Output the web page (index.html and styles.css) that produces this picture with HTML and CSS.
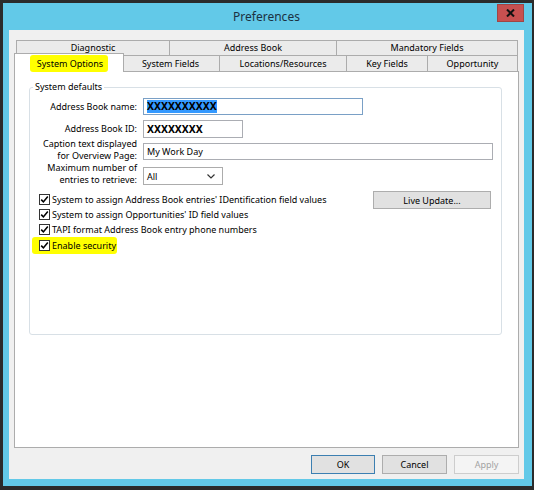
FILE: index.html
```html
<!DOCTYPE html>
<html lang="en">
<head>
<meta charset="utf-8">
<title>Preferences</title>
<link rel="stylesheet" href="styles.css">
</head>
<body>
<div class="window">
  <div class="frame">
    <header class="titlebar">
      <span class="title">Preferences</span>
      <button class="close" aria-label="Close">
        <svg width="9" height="8" viewBox="0 0 9 8"><path d="M1 0.5 L8 7.5 M8 0.5 L1 7.5" stroke="#111" stroke-width="2" fill="none"/></svg>
      </button>
    </header>
    <div class="client">
      <div class="tabs">
        <div class="tabrow row1">
          <div class="tab t-diag">Diagnostic</div>
          <div class="tab t-ab">Address Book</div>
          <div class="tab t-mand">Mandatory Fields</div>
        </div>
        <div class="tabrow row2">
          <div class="tab t-sysopt"><span class="marker tab-marker">System Options</span></div>
          <div class="tab t-sysf">System Fields</div>
          <div class="tab t-loc">Locations/Resources</div>
          <div class="tab t-key">Key Fields</div>
          <div class="tab t-opp">Opportunity</div>
        </div>
      </div>
      <div class="panel">
        <fieldset class="group">
          <legend>System defaults</legend>
          <div class="field f1">
            <span class="lbl">Address Book name:</span>
            <div class="input w-name focused"><span class="masked sel">XXXXXXXXXX</span></div>
          </div>
          <div class="field f2">
            <span class="lbl">Address Book ID:</span>
            <div class="input w-id"><span class="masked">XXXXXXXX</span></div>
          </div>
          <div class="field f3">
            <span class="lbl">Caption text displayed<br>for Overview Page:</span>
            <div class="input w-cap">My Work Day</div>
          </div>
          <div class="field f4">
            <span class="lbl">Maximum number of<br>entries to retrieve:</span>
            <div class="input select"><span>All</span>
              <svg width="8" height="5" viewBox="0 0 8 5"><path d="M0.5 0.5 L4 4 L7.5 0.5" stroke="#333" stroke-width="1.2" fill="none"/></svg>
            </div>
          </div>
          <div class="checks-area">
            <div class="checks">
              <div class="check">
                <svg class="box" width="11" height="11" viewBox="0 0 11 11"><rect x="0.5" y="0.5" width="10" height="10" fill="#fff" stroke="#333"/><path d="M2.2 5.6 L4.4 7.9 L8.8 2.6" stroke="#000" stroke-width="1.6" fill="none"/></svg>
                <span>System to assign Address Book entries' IDentification field values</span>
              </div>
              <div class="check">
                <svg class="box" width="11" height="11" viewBox="0 0 11 11"><rect x="0.5" y="0.5" width="10" height="10" fill="#fff" stroke="#333"/><path d="M2.2 5.6 L4.4 7.9 L8.8 2.6" stroke="#000" stroke-width="1.6" fill="none"/></svg>
                <span>System to assign Opportunities' ID field values</span>
              </div>
              <div class="check">
                <svg class="box" width="11" height="11" viewBox="0 0 11 11"><rect x="0.5" y="0.5" width="10" height="10" fill="#fff" stroke="#333"/><path d="M2.2 5.6 L4.4 7.9 L8.8 2.6" stroke="#000" stroke-width="1.6" fill="none"/></svg>
                <span>TAPI format Address Book entry phone numbers</span>
              </div>
              <div class="check marker check-marker">
                <svg class="box" width="11" height="11" viewBox="0 0 11 11"><rect x="0.5" y="0.5" width="10" height="10" fill="#fff" stroke="#333"/><path d="M2.2 5.6 L4.4 7.9 L8.8 2.6" stroke="#000" stroke-width="1.6" fill="none"/></svg>
                <span>Enable security</span>
              </div>
            </div>
            <button class="btn live">Live Update...</button>
          </div>
        </fieldset>
      </div>
      <div class="buttons">
        <button class="btn ok">OK</button>
        <button class="btn">Cancel</button>
        <button class="btn apply" disabled>Apply</button>
      </div>
    </div>
  </div>
</div>
</body>
</html>
```
FILE: styles.css
```css
* { box-sizing: border-box; }
html, body { margin: 0; padding: 0; }
body {
  background: #2b2b2b;
  font-family: "Noto Sans", "Open Sans", sans-serif;
  font-size: 9px;
  color: #000;
}
.window {
  width: 534px;
  height: 490px;
  padding: 3px 2px 4px 3px;
  background: #2b2b2b;
}
.frame {
  height: 100%;
  background: #62c9e8;
  padding: 0 8px 7px 6px;
  display: flex;
  flex-direction: column;
}
.titlebar {
  height: 27px;
  flex: none;
  display: grid;
  grid-template-columns: 1fr auto 1fr;
  align-items: start;
}
.title {
  grid-column: 2;
  font-size: 12px;
  line-height: 14px;
  margin-top: 7px;
  color: #1c3142;
}
.close {
  grid-column: 3;
  justify-self: end;
  width: 27px;
  height: 18px;
  margin-top: 1px;
  padding: 0;
  background: #c75050;
  border: 1px solid #a04545;
  display: flex;
  align-items: center;
  justify-content: center;
}
.client {
  flex: 1;
  background: #f0f0f0;
  padding: 10px 5px 5px;
  display: flex;
  flex-direction: column;
}
.tabs { padding: 0 1px 0 2px; flex: none; }
.tabrow { display: flex; }
.tab {
  border: 1px solid #acacac;
  border-bottom: 0;
  background: #ebebeb;
  margin-right: -1px;
  text-align: center;
  white-space: nowrap;
  flex: none;
}
.row1 .tab { height: 15px; line-height: 14px; }
.row2 { height: 16px; align-items: flex-start; }
.row2 .tab { height: 16px; line-height: 15px; }
.t-diag { width: 154px; }
.t-ab { width: 168px; }
.t-mand { width: 182px; margin-right: 0; }
.row2 .t-sysopt {
  width: 110px;
  height: 19px;
  margin: -2px -3px 0 -2px;
  background: #fff;
  position: relative;
  z-index: 1;
  display: flex;
  justify-content: center;
  padding-top: 1px;
}
.t-sysf { width: 99px; }
.t-loc { width: 128px; }
.t-key { width: 82px; }
.t-opp { width: 91px; margin-right: 0; }
.marker { background: #ffff00; border-radius: 3px; }
.tab-marker {
  display: block;
  height: 17px;
  line-height: 17px;
  padding: 0 5px 0 7px;
}
.panel {
  flex: 1;
  background: #fff;
  border: 1px solid #acacac;
  padding-top: 7px;
}
.group {
  margin: 0 16px 0 14px;
  padding: 0;
  border: 1px solid #d8e0e6;
  border-radius: 3px;
  height: 256px;
  min-width: 0;
}
.group legend {
  padding: 0 2px;
  margin-left: 3px;
  line-height: 16px;
}
.field { display: flex; align-items: center; }
.lbl {
  width: 107px;
  flex: none;
  text-align: right;
  line-height: 11.5px;
  margin-right: 6px;
  white-space: nowrap;
}
.f1 { margin-top: 3px; height: 17px; }
.f2 { margin-top: 5px; height: 18px; }
.f3, .f4 { align-items: flex-start; }
.f4 { margin-top: 1px; }
.f3 .input, .f4 .input { margin-top: 5px; }
.input {
  height: 17px;
  border: 1px solid #abadb3;
  background: #fff;
  padding: 0 3px;
  display: flex;
  align-items: center;
  flex: none;
}
.w-name { width: 220px; }
.focused { border-color: #7aa0c6; }
.w-id { width: 100px; height: 18px; }
.w-cap { width: 350px; }
.select {
  width: 80px;
  height: 18px;
  justify-content: space-between;
  padding: 0 7px 0 3px;
  border-color: #acacac;
}
.masked {
  font-size: 10.4px;
  font-weight: 700;
  line-height: 13px;
}
.sel { background: #3399ff; }
.checks-area {
  display: flex;
  justify-content: space-between;
  align-items: flex-start;
  margin-top: 7px;
  padding: 0 10px 0 9px;
}
.checks { display: flex; flex-direction: column; align-items: flex-start; }
.check {
  display: flex;
  align-items: center;
  gap: 2px;
  height: 15.2px;
  white-space: nowrap;
}
.box { flex: none; display: block; }
.check-marker {
  height: 17.2px;
  margin: -1px -1px -1px -7px;
  padding: 0 1px 0 7px;
}
.btn {
  font-family: inherit;
  font-size: 9px;
  color: #000;
  padding: 0;
  height: 19px;
  width: 65px;
  background: #e1e1e1;
  border: 1px solid #adadad;
}
.live { width: 118px; height: 18px; margin-top: -1px; }
.buttons {
  display: flex;
  justify-content: flex-end;
  gap: 7px;
  margin-top: 7px;
  flex: none;
}
.ok { border-color: #3c7fb1; width: 64px; }
.apply {
  color: #a3a3a3;
  background: #f4f4f4;
  border-color: #cdcdcd;
}
```
